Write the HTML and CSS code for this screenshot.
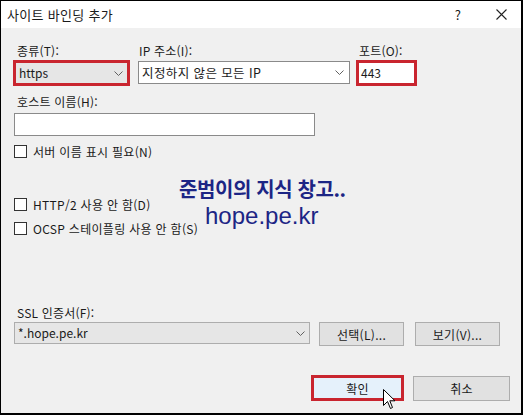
FILE: index.html
```html
<!DOCTYPE html>
<html lang="ko">
<head>
  <meta charset="UTF-8">
  <title>사이트 바인딩 추가</title>
  <link rel="stylesheet" href="styles.css">
</head>
<body>
  <div class="dialog">
    <div class="titlebar">
      <span class="title">사이트 바인딩 추가</span>
      <span class="help">?</span>
      <svg class="close" width="11" height="11" viewBox="0 0 11 11">
        <path d="M0.5 0.5 L10.5 10.5 M10.5 0.5 L0.5 10.5" stroke="#222" stroke-width="1.1" fill="none"/>
      </svg>
    </div>

    <div class="content">
      <div class="field-row">
        <div class="field type-field">
          <div class="label">종류(T):</div>
          <div class="mark">
            <div class="combo combo-gray">
              <span>https</span>
              <svg class="chev" width="9" height="5" viewBox="0 0 9 5"><path d="M0.5 0.5 L4.5 4.5 L8.5 0.5" stroke="#606060" fill="none"/></svg>
            </div>
          </div>
        </div>
        <div class="field ip-field">
          <div class="label">IP 주소(I):</div>
          <div class="combo combo-white ip-combo">
            <span>지정하지 않은 모든 IP</span>
            <svg class="chev" width="9" height="5" viewBox="0 0 9 5"><path d="M0.5 0.5 L4.5 4.5 L8.5 0.5" stroke="#606060" fill="none"/></svg>
          </div>
        </div>
        <div class="field port-field">
          <div class="label">포트(O):</div>
          <div class="mark">
            <div class="textbox port-box">443</div>
          </div>
        </div>
      </div>

      <div class="label host-label">호스트 이름(H):</div>
      <div class="textbox host-box"></div>

      <div class="check sni-check"><span class="box"></span>서버 이름 표시 필요(N)</div>
      <div class="check http2-check"><span class="box"></span>HTTP/2 사용 안 함(D)</div>
      <div class="check ocsp-check"><span class="box"></span>OCSP 스테이플링 사용 안 함(S)</div>

      <div class="label ssl-label">SSL 인증서(F):</div>
      <div class="ssl-row">
        <div class="combo combo-gray ssl-combo">
          <span>*.hope.pe.kr</span>
          <svg class="chev" width="9" height="5" viewBox="0 0 9 5"><path d="M0.5 0.5 L4.5 4.5 L8.5 0.5" stroke="#606060" fill="none"/></svg>
        </div>
        <div class="btn">선택(L)...</div>
        <div class="btn">보기(V)...</div>
      </div>

      <div class="footer">
        <div class="mark ok-mark"><div class="btn btn-ok">확인</div></div>
        <div class="btn btn-cancel">취소</div>
      </div>

      <div class="watermark">
        <div class="wm-title">준범이의 지식 창고..</div>
        <div class="wm-url">hope.pe.kr</div>
      </div>

      <svg class="cursor" width="13" height="21" viewBox="0 0 13 21">
        <path d="M0.5 0.5 L0.5 16.5 L4.5 12.5 L7.5 19.5 L9.5 18.5 L6.8 11.8 L12 11.8 Z" fill="#fff" stroke="#000" stroke-width="1" stroke-linejoin="miter"/>
      </svg>
    </div>
  </div>
</body>
</html>
```

FILE: styles.css
```css
body {
  margin: 0;
  background: #f0f0f0;
  font-family: "Noto Sans CJK KR", "Noto Sans", sans-serif;
  font-size: 12px;
  color: #1a1a1a;
}

.dialog {
  position: relative;
  width: 523px;
  height: 415px;
  box-sizing: border-box;
  border: 1px solid #000;
  border-right-width: 2px;
  border-bottom-width: 2px;
  background: #f0f0f0;
  overflow: hidden;
}

.titlebar {
  display: flex;
  align-items: center;
  height: 27px;
  background: #fff;
  padding-left: 6px;
}

.title {
  font-size: 13px;
  letter-spacing: 0.3px;
  flex: 1;
}

.help {
  font-size: 13px;
  margin-right: 35px;
}

.close {
  margin-right: 14px;
}

.content {
  position: relative;
  padding-left: 12px;
}

.label {
  height: 16px;
  line-height: 16px;
  letter-spacing: 0.2px;
}

/* top row: type / ip / port */
.field-row {
  display: flex;
  padding-top: 15px;
}

.field .label {
  height: 17px;
}

.type-field .label {
  padding-left: 4px;
}

.ip-field {
  margin-left: 8px;
}

.ip-field .label {
  padding-left: 1px;
}

.port-field {
  margin-left: 6px;
}

.port-field .label {
  padding-left: 3px;
}

.mark {
  border: 3px solid #c9252f;
  box-sizing: border-box;
  height: 26px;
}

.type-field .mark {
  width: 117px;
}

.port-field .mark {
  width: 61px;
}

.combo {
  display: flex;
  align-items: center;
  justify-content: space-between;
  box-sizing: border-box;
  padding: 0 4px 0 3px;
  line-height: 16px;
}

.combo-gray {
  background: #e6e6e6;
  border: 1px solid #adadad;
}

.mark .combo-gray {
  height: 20px;
  border: none;
  padding-left: 3px;
}

.combo-white {
  background: #fff;
  border: 1px solid #8a8a8a;
}

.ip-combo {
  width: 212px;
  height: 23px;
  margin-top: 1px;
  padding-right: 5px;
  font-size: 12.5px;
  letter-spacing: 0.4px;
}

.textbox {
  box-sizing: border-box;
  background: #fff;
  border: 1px solid #8a8a8a;
}

.port-box {
  height: 20px;
  border: none;
  padding-left: 2px;
  line-height: 20px;
}

.host-label {
  margin-top: 8px;
  padding-left: 4px;
}

.host-box {
  width: 301px;
  height: 23px;
  margin-top: 3px;
  margin-left: 1px;
}

/* checkboxes */
.check {
  display: flex;
  align-items: center;
  height: 13px;
  margin-left: 1px;
  letter-spacing: 0.3px;
}

.check .box {
  width: 13px;
  height: 13px;
  box-sizing: border-box;
  border: 1px solid #333;
  background: #fff;
  margin-right: 6px;
}

.sni-check {
  margin-top: 9px;
}

.http2-check {
  margin-top: 40px;
}

.ocsp-check {
  margin-top: 11px;
}

/* certificate row */
.ssl-label {
  margin-top: 70px;
  padding-left: 4px;
}

.ssl-row {
  display: flex;
  margin-top: 1px;
  margin-left: 1px;
}

.ssl-combo {
  width: 296px;
  height: 22px;
}

.btn {
  display: flex;
  align-items: center;
  justify-content: center;
  box-sizing: border-box;
  background: #e1e1e1;
  border: 1px solid #adadad;
  letter-spacing: 0.3px;
}

.ssl-row .btn {
  width: 85px;
  height: 24px;
  margin-left: 9px;
}

.ssl-row .btn + .btn {
  margin-left: 11px;
}

.footer {
  display: flex;
  align-items: flex-start;
  margin-top: 29px;
  padding-left: 298px;
}

.ok-mark {
  width: 93px;
  height: 26px;
}

.btn-ok {
  height: 20px;
  background: #e5f1fb;
  border: none;
}

.btn-cancel {
  width: 97px;
  height: 25px;
  margin-top: 1px;
  margin-left: 9px;
}

/* blog watermark over the dialog */
.watermark {
  position: absolute;
  left: 178px;
  top: 151px;
  color: #1c2585;
}

.wm-title {
  font-weight: bold;
  font-size: 20px;
  line-height: 20px;
  letter-spacing: -0.4px;
}

.wm-url {
  font-family: "Liberation Sans", Arial, sans-serif;
  font-size: 24px;
  line-height: 24px;
  margin-top: 5px;
  margin-left: 26px;
}

.cursor {
  position: absolute;
  left: 382px;
  top: 361px;
}
```
